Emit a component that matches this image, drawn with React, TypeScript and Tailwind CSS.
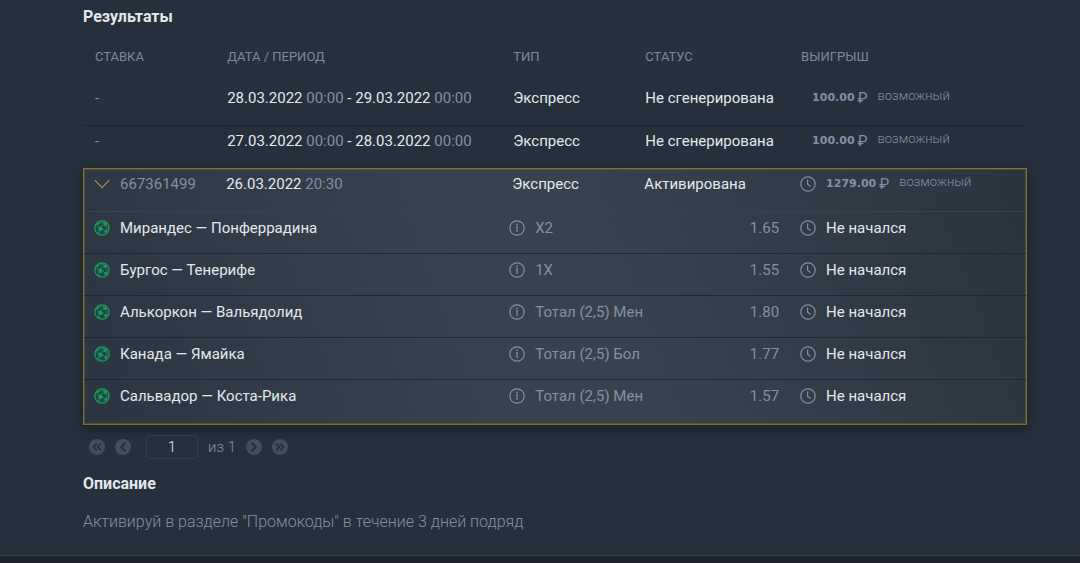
import { ReactNode } from "react";
import { ChevronLeft, ChevronRight, ChevronsLeft, ChevronsRight } from "lucide-react";

interface PendingBet {
  from: string;
  to: string;
}

interface Match {
  teams: string;
  outcome: string;
  odds: string;
}

const pendingBets: PendingBet[] = [
  { from: "28.03.2022", to: "29.03.2022" },
  { from: "27.03.2022", to: "28.03.2022" },
];

const matches: Match[] = [
  { teams: "Мирандес — Понферрадина", outcome: "X2", odds: "1.65" },
  { teams: "Бургос — Тенерифе", outcome: "1X", odds: "1.55" },
  { teams: "Алькоркон — Вальядолид", outcome: "Тотал (2,5) Мен", odds: "1.80" },
  { teams: "Канада — Ямайка", outcome: "Тотал (2,5) Бол", odds: "1.77" },
  { teams: "Сальвадор — Коста-Рика", outcome: "Тотал (2,5) Мен", odds: "1.57" },
];

function ClockIcon() {
  return (
    <svg viewBox="0 0 16 16" className="w-4 h-4 shrink-0" fill="none" stroke="currentColor" strokeWidth="1.2">
      <circle cx="8" cy="8" r="7.2" />
      <path d="M7.6 3.6v4.6l3 2.2" />
    </svg>
  );
}

function InfoIcon() {
  return (
    <svg viewBox="0 0 16 16" className="w-4 h-4 shrink-0" fill="none" stroke="currentColor" strokeWidth="1.2">
      <circle cx="8" cy="8" r="7.2" />
      <path d="M7 6.6h1.1v5.4" />
      <circle cx="8" cy="4.4" r="0.8" fill="currentColor" stroke="none" />
    </svg>
  );
}

function BallIcon() {
  return (
    <svg viewBox="0 0 16 16" className="w-4 h-4 shrink-0 text-[#229a63]">
      <circle cx="8" cy="8" r="7.2" fill="#1b4a44" stroke="currentColor" strokeWidth="1.2" />
      <path
        fill="currentColor"
        d="M4.2 7.6 6.8 6.2 8.8 8.4 7.6 11 4.8 10.4ZM9 2 12.8 3.4 12.6 6.2 9.8 5.4ZM2.2 4.4 4.6 2.2 5.2 3.6 3 5.8ZM10.2 10.8 13 9.6 13.4 11.6 10.8 13.6ZM3.4 12.2 5 12.6 6.4 14.4 4.6 13.8Z"
      />
      <path
        d="M6.8 6.2 9.8 5.4M8.8 8.4 10.2 10.8M12.6 6.2 13 9.6M4.2 7.6 3 5.8M5.2 3.6 9 2M4.8 10.4 5 12.6"
        stroke="currentColor"
        strokeWidth="0.7"
      />
    </svg>
  );
}

function Prize({ amount }: { amount: string }) {
  return (
    <span className="flex gap-[10px] text-[#8091a5]">
      <span className="flex gap-[3px]">
        <span className="font-['DejaVu_Sans',sans-serif] text-[11px] leading-5 font-bold">{amount}</span>
        <span>₽</span>
      </span>
      <span className="text-[13px] leading-4 font-light">возможный</span>
    </span>
  );
}

function PageButton({ label, children }: { label: string; children: ReactNode }) {
  return (
    <button
      type="button"
      aria-label={label}
      className="flex items-center justify-center w-4 h-4 rounded-full bg-[#434e5b] text-[#24303c]"
    >
      {children}
    </button>
  );
}

export default function App() {
  return (
    <div className="min-h-screen bg-[#1e222c] font-[Roboto,sans-serif] text-[15px] leading-5 text-[#e4e8ed]">
      <main className="pl-[83px] pr-[53px] pt-[7px] pb-[23px] bg-[#25303c] border-b border-[#36434a]">
        <h2 className="text-base leading-5 font-bold">Результаты</h2>
        <table className="w-full mt-5 table-fixed border-collapse text-left">
          <colgroup>
            <col className="w-[14%]" />
            <col className="w-[30.3%]" />
            <col className="w-[14%]" />
            <col className="w-[16.5%]" />
            <col />
          </colgroup>
          <thead>
            <tr className="h-9 align-top text-[13px] text-[#7b899b]">
              <th className="pl-3 font-normal">СТАВКА</th>
              <th className="pl-3 font-normal">ДАТА / ПЕРИОД</th>
              <th className="pl-3 font-normal">ТИП</th>
              <th className="pl-3 font-normal">СТАТУС</th>
              <th className="pl-3 font-normal">ВЫИГРЫШ</th>
            </tr>
          </thead>
          <tbody>
            {pendingBets.map((bet) => (
              <tr key={bet.from} className="h-[42px] align-top border-b border-[#1e2731] last:h-[43px] last:border-b-0">
                <td className="pl-3 pt-[5px] text-[#8091a5]">-</td>
                <td className="pl-3 pt-[5px] whitespace-nowrap">
                  {bet.from} <span className="text-[#8091a5]">00:00</span> - {bet.to}{" "}
                  <span className="text-[#8091a5]">00:00</span>
                </td>
                <td className="pl-3 pt-[5px]">Экспресс</td>
                <td className="pl-3 pt-[5px] whitespace-nowrap">Не сгенерирована</td>
                <td className="pl-[23px] pt-[5px]">
                  <Prize amount="100.00" />
                </td>
              </tr>
            ))}
          </tbody>
          <tbody className="outline outline-1 -outline-offset-1 outline-[#86702a] bg-[linear-gradient(70deg,#2a3541_0%,#38424e_42%,#38424e_55%,#29343f_100%)] shadow-[0_4px_10px_rgba(0,0,0,0.35),inset_0_0_0_2px_rgba(146,119,31,0.35)]">
            <tr className="h-[43px] align-top border-b border-[#38424c]">
              <td className="pl-[11px] pt-[6px]">
                <button type="button" aria-expanded="true" className="flex items-center gap-[10px] text-[#8091a5]">
                  <svg viewBox="0 0 16 16" className="w-4 h-4 text-[#b18a3e]" fill="none" stroke="currentColor">
                    <path d="M.8 4.2 8 11.6l7.2-7.4" strokeWidth="1.2" />
                  </svg>
                  667361499
                </button>
              </td>
              <td className="pl-[11px] pt-[6px]">
                26.03.2022 <span className="text-[#8091a5]">20:30</span>
              </td>
              <td className="pl-[11px] pt-[6px]">Экспресс</td>
              <td className="pl-[11px] pt-[6px]">Активирована</td>
              <td className="pl-[11px] pt-[6px]">
                <span className="flex items-start gap-[10px] text-[#8091a5]">
                  <span className="flex items-center h-5">
                    <ClockIcon />
                  </span>
                  <Prize amount="1279.00" />
                </span>
              </td>
            </tr>
            {matches.map((match) => (
              <tr key={match.teams} className="h-[42px] align-top border-b border-[#1f2833] last:h-[46px] last:border-b-0">
                <td colSpan={2} className="pl-[11px] pt-[6px]">
                  <span className="flex items-center gap-[10px]">
                    <BallIcon />
                    {match.teams}
                  </span>
                </td>
                <td colSpan={2} className="pl-2 pr-[10px] pt-[6px]">
                  <span className="flex items-center gap-[10px] text-[#8091a5]">
                    <InfoIcon />
                    {match.outcome}
                    <span className="ml-auto">{match.odds}</span>
                  </span>
                </td>
                <td className="pl-[11px] pt-[6px]">
                  <span className="flex items-center gap-[10px]">
                    <span className="text-[#8091a5]">
                      <ClockIcon />
                    </span>
                    Не начался
                  </span>
                </td>
              </tr>
            ))}
          </tbody>
        </table>
        <nav aria-label="Страницы" className="flex items-center gap-[10px] mt-[10px] pl-[6px]">
          <PageButton label="Первая страница">
            <ChevronsLeft className="w-[14px] h-[14px]" strokeWidth={3} />
          </PageButton>
          <PageButton label="Предыдущая страница">
            <ChevronLeft className="w-[14px] h-[14px]" strokeWidth={4} />
          </PageButton>
          <input
            type="text"
            aria-label="Номер страницы"
            defaultValue="1"
            className="w-[52px] h-6 mx-[5px] rounded border border-[#333e4a] bg-transparent text-center font-light"
          />
          <span className="-ml-[5px] font-light text-[#8091a5]">из 1</span>
          <PageButton label="Следующая страница">
            <ChevronRight className="w-[14px] h-[14px]" strokeWidth={4} />
          </PageButton>
          <PageButton label="Последняя страница">
            <ChevronsRight className="w-[14px] h-[14px]" strokeWidth={3} />
          </PageButton>
        </nav>
        <h2 className="mt-[15px] text-base leading-5 font-bold">Описание</h2>
        <p className="mt-[18px] text-base leading-5 font-light text-[#8091a5]">
          Активируй в разделе "Промокоды" в течение 3 дней подряд
        </p>
      </main>
    </div>
  );
}
